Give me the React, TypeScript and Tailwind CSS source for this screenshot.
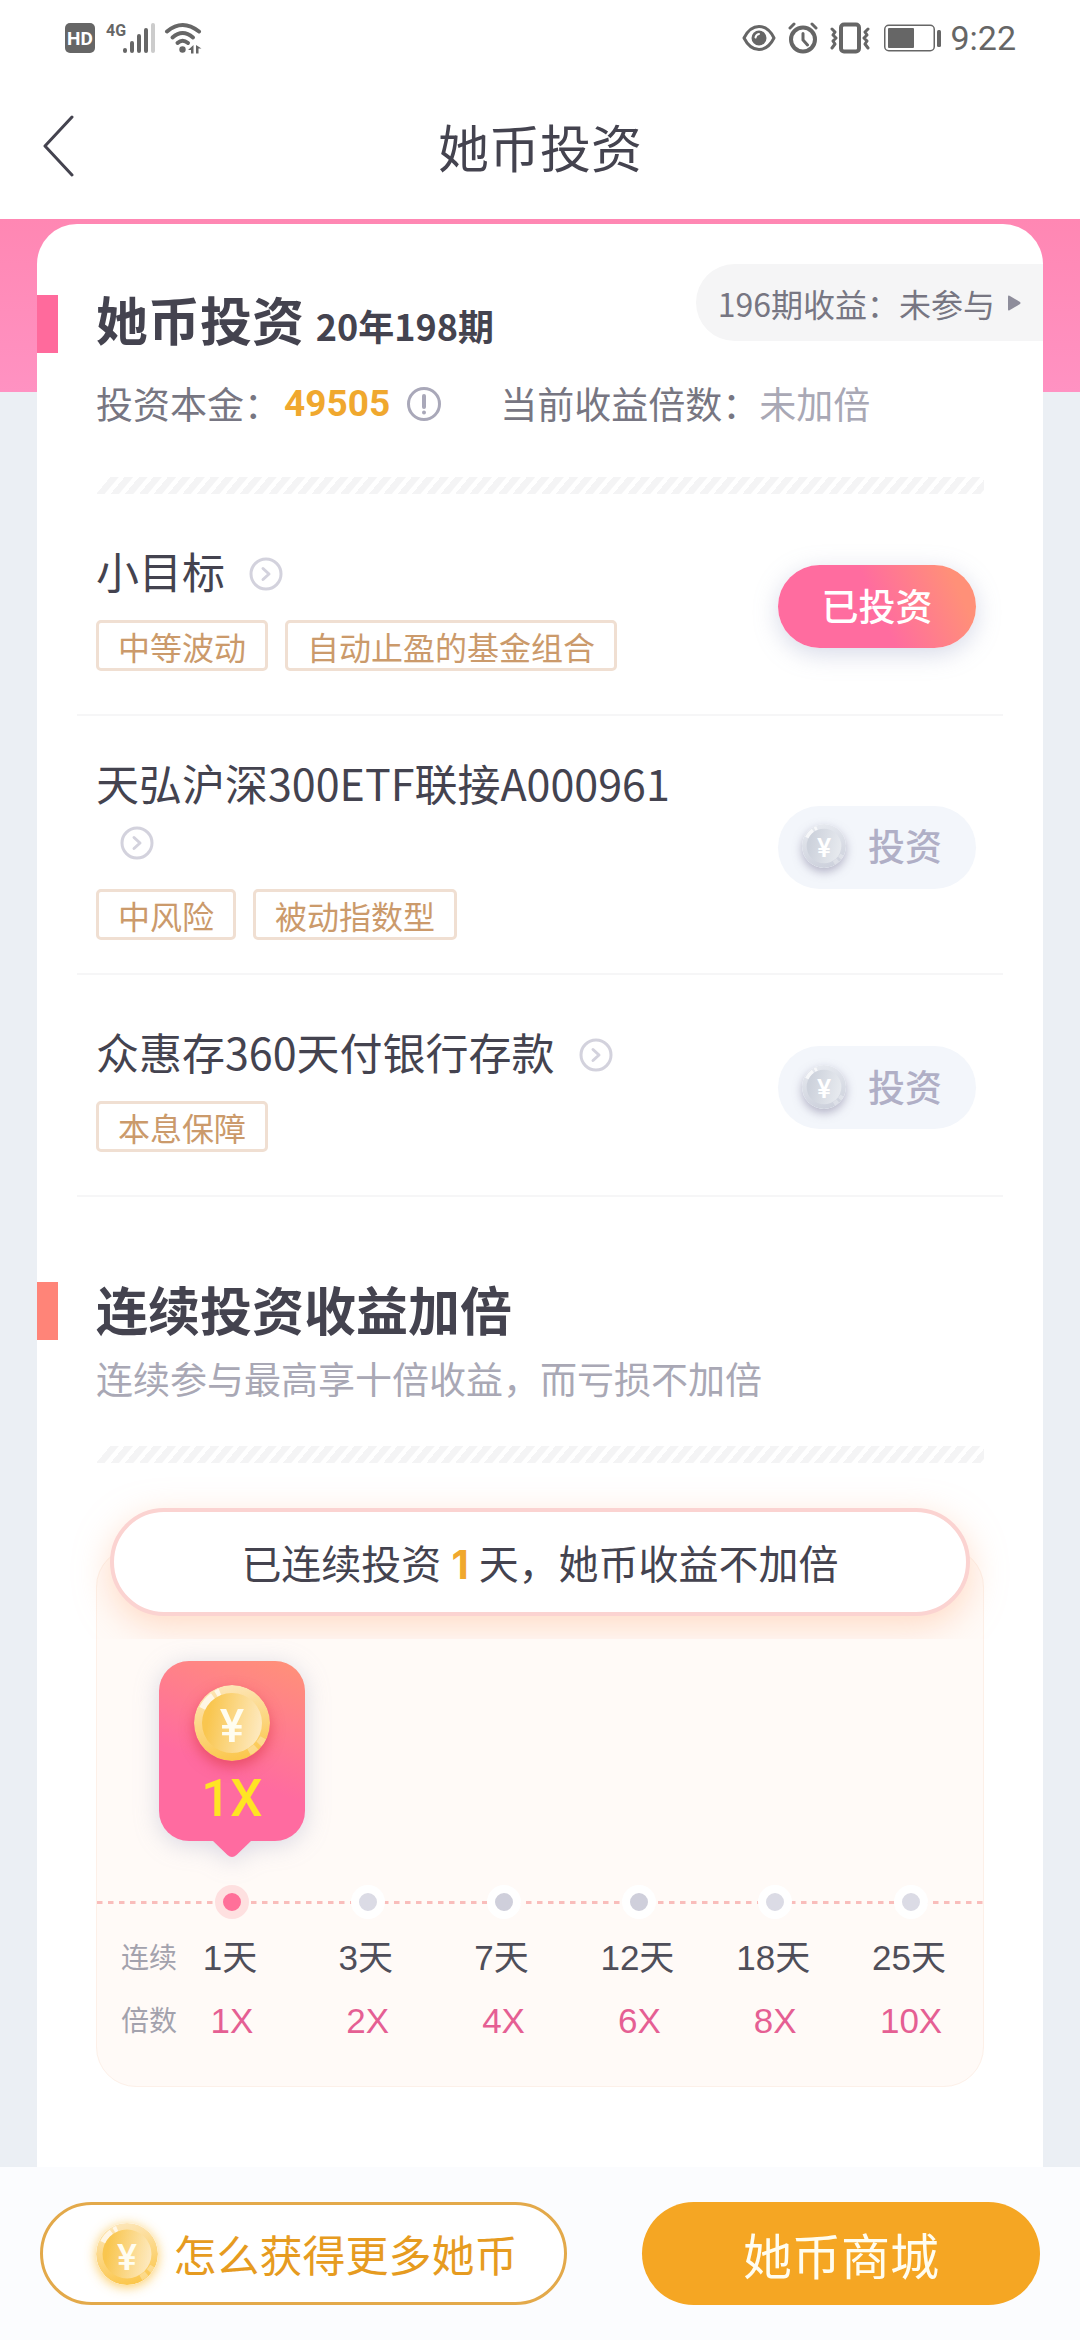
import React from 'react';

type CoinTone = 'gold' | 'silver';

interface Product {
    name: string;
    tags: string[];
    invested: boolean;
}

interface Step {
    days: string;
    rate: string;
    state: 'active' | 'dark' | 'light';
}

const products: Product[] = [
    { name: '小目标', tags: ['中等波动', '自动止盈的基金组合'], invested: true },
    { name: '天弘沪深300ETF联接A000961', tags: ['中风险', '被动指数型'], invested: false },
    { name: '众惠存360天付银行存款', tags: ['本息保障'], invested: false },
];

const steps: Step[] = [
    { days: '1天', rate: '1X', state: 'active' },
    { days: '3天', rate: '2X', state: 'light' },
    { days: '7天', rate: '4X', state: 'dark' },
    { days: '12天', rate: '6X', state: 'dark' },
    { days: '18天', rate: '8X', state: 'light' },
    { days: '25天', rate: '10X', state: 'light' },
];

const dotClasses: Record<Step['state'], string> = {
    active: 'border-[#fee0e0] bg-[#ff7099]',
    dark: 'border-white bg-[#cfcfdb]',
    light: 'border-white bg-[#dbdbe5]',
};

const coinColors = {
    gold: { rimTop: '#fde6b8', rimBottom: '#fbc64a', faceLeft: '#f9c64f', faceRight: '#fde8bb', yen: '#fffdf0' },
    silver: { rimTop: '#e6e9ef', rimBottom: '#cdd1dc', faceLeft: '#cdd2dc', faceRight: '#e6e9ee', yen: '#ffffff' },
};

const Coin: React.FC<{ tone: CoinTone; className: string }> = ({ tone, className }) => {
    const id = React.useId();
    const c = coinColors[tone];
    return (
        <svg viewBox="0 0 76 76" className={className} aria-hidden="true">
            <defs>
                <linearGradient id={`${id}rim`} x1="0.4" y1="0" x2="0.6" y2="1">
                    <stop offset="0" stopColor={c.rimTop} />
                    <stop offset="1" stopColor={c.rimBottom} />
                </linearGradient>
                <linearGradient id={`${id}face`} x1="0" y1="0.4" x2="1" y2="0.6">
                    <stop offset="0.1" stopColor={c.faceLeft} />
                    <stop offset="0.95" stopColor={c.faceRight} />
                </linearGradient>
            </defs>
            <circle cx="38" cy="38" r="38" fill={`url(#${id}rim)`} />
            <path d="M8.5 23.5A33 33 0 0 1 19 11" fill="none" stroke="#fff" strokeOpacity="0.7" strokeWidth="7" />
            <path d="M22 9A33 33 0 0 1 26 7" fill="none" stroke="#fff" strokeOpacity="0.7" strokeWidth="7" />
            <path d="M69.500 53A34 34 0 0 1 65 59" fill="none" stroke="#fff" strokeOpacity="0.3" strokeWidth="7" />
            <path d="M62 62A34 34 0 0 1 55 67" fill="none" stroke="#fff" strokeOpacity="0.3" strokeWidth="7" />
            <circle cx="38" cy="38" r="30" fill={`url(#${id}face)`} />
            <text
                x="38"
                y="57"
                textAnchor="middle"
                fill={c.yen}
                className="font-['Roboto',sans-serif] text-[46px] font-medium"
            >
                ¥
            </text>
        </svg>
    );
};

const StatusBar = () => (
    <div className="flex h-[76px] items-center justify-between pr-16 pl-16 text-[#666]">
        <div className="flex items-center">
            <svg width="92" height="32" viewBox="0 0 92 32" aria-label="HD 4G">
                <rect x="1" y="1" width="30" height="30" rx="5" fill="currentColor" />
                <text x="16" y="23" textAnchor="middle" fill="#fff" className="font-['Roboto',sans-serif] text-[19px] font-bold">HD</text>
                <text x="42" y="14" fill="currentColor" className="font-['Roboto',sans-serif] text-[16px] font-bold">4G</text>
                <g stroke="currentColor" strokeWidth="4" strokeLinecap="round">
                    <path d="M61 28v1M68 21v8M75 14v15M82 8v21" />
                    <path d="M89 3v26" stroke="#ccc" />
                </g>
            </svg>
            <svg className="ml-2" width="38" height="32" viewBox="0 0 38 32" aria-hidden="true">
                <g fill="none" stroke="currentColor" strokeWidth="4" strokeLinecap="round">
                    <path d="M3 9.500Q18.500-3.500 35 9.500" />
                    <path d="M8.500 15.500Q18.500 6.500 29 15.500" />
                    <path d="M13.500 21Q18.500 16.500 24 21" />
                </g>
                <circle cx="18.500" cy="27.500" r="3.200" fill="currentColor" />
                <path d="M29.500 23v8.500h-2.500v-3.500h-3zM32 31.500V23l5.500 3.500h-3v5z" fill="currentColor" />
            </svg>
        </div>
        <div className="flex items-center">
            <svg width="34" height="32" viewBox="0 0 34 32" fill="none" stroke="currentColor" strokeWidth="3" aria-hidden="true">
                <path d="M2 16C6 8 11 4.500 17 4.500S28 8 32 16C28 24 23 27.500 17 27.500S6 24 2 16z" strokeLinejoin="round" />
                <circle cx="17" cy="16" r="7.500" fill="currentColor" stroke="none" />
                <path d="M13.500 15.500Q14 12.500 17 12" stroke="#fff" strokeWidth="2" strokeLinecap="round" />
            </svg>
            <svg className="ml-3" width="30" height="32" viewBox="0 0 30 32" fill="none" stroke="currentColor" strokeWidth="4" strokeLinecap="round" aria-hidden="true">
                <circle cx="15" cy="17.500" r="12" />
                <path d="M15 11.500v6.500l4.500 5M2 6l4-4M24 2l4 4" strokeWidth="3" />
            </svg>
            <svg className="ml-3" width="40" height="32" viewBox="0 0 40 32" fill="none" stroke="currentColor" strokeLinecap="round" strokeLinejoin="round" aria-hidden="true">
                <rect x="11" y="2.500" width="18" height="27" rx="3" strokeWidth="4" />
                <path d="M2 7l3 3-2 3 3 3-3 3 2 3-3 4M38 7l-3 3 2 3-3 3 3 3-2 3 3 4" strokeWidth="3" />
            </svg>
            <svg className="ml-3" width="60" height="32" viewBox="0 0 60 32" fill="none" aria-hidden="true">
                <rect x="2.750" y="3.250" width="49.500" height="25.500" rx="4" stroke="currentColor" strokeWidth="1.500" />
                <rect x="6" y="6" width="26" height="20" rx="1" fill="currentColor" />
                <rect x="55" y="8" width="4" height="17" rx="1.500" fill="currentColor" />
            </svg>
            <span className="ml-2 font-['Roboto',sans-serif] text-[34px] leading-[40px]">9:22</span>
        </div>
    </div>
);

const NavBar = () => (
    <nav className="grid h-[143px] grid-cols-[1fr_auto_1fr] items-center px-10 pb-[3px] text-[#44434f]">
        <button type="button" aria-label="返回" className="justify-self-start">
            <svg width="36" height="62" viewBox="0 0 36 62" fill="none" stroke="currentColor" strokeWidth="3" strokeLinecap="round" strokeLinejoin="round">
                <path d="M32 2L5 31L32 60" />
            </svg>
        </button>
        <h1 className="text-[51px] leading-[60px]">她币投资</h1>
    </nav>
);

const SectionTitle: React.FC<{ barClass: string; children: React.ReactNode }> = ({ barClass, children }) => (
    <div className="flex h-[58px] items-center gap-[38px]">
        <span className={`h-full w-[21px] ${barClass}`} />
        <h2 className="pb-1 text-[52px] leading-[58px] font-bold text-[#44434f]">{children}</h2>
    </div>
);

const Stripes = () => (
    <div className="mx-[59px] h-[17px] bg-[repeating-linear-gradient(130deg,#f4f4f5_0,#f4f4f5_6px,#fff_7px,#fff_11px)] [clip-path:polygon(14px_0,100%_0,100%_100%,0_100%)]" />
);

const CircleArrow = () => (
    <svg className="mb-[6px] ml-6 inline-block align-middle" width="34" height="34" viewBox="0 0 34 34" fill="none" stroke="#d3d2dd" strokeWidth="3" strokeLinecap="round" strokeLinejoin="round" aria-hidden="true">
        <circle cx="17" cy="17" r="15" />
        <path d="M14 11.500L20 17L14 22.500" />
    </svg>
);

const ProductRow: React.FC<{ product: Product }> = ({ product }) => (
    <li className="mx-10 flex min-h-[222px] items-center justify-between border-b-2 border-[#f6f6f7] pt-[38px] pr-[27px] pb-[33px] pl-[19px]">
        <div className="w-[600px]">
            <a href="#detail" className="block text-[43px] leading-[57px] text-[#44434f]">
                {product.name}
                <CircleArrow />
            </a>
            <div className="mt-[21px] flex gap-[17px]">
                {product.tags.map(tag => (
                    <span
                        key={tag}
                        className="flex h-[51px] items-center rounded-[5px] border-3 border-[#f0dfd2] px-[19px] text-[32px] leading-[40px] text-[#cb9a6b]"
                    >
                        {tag}
                    </span>
                ))}
            </div>
        </div>
        {product.invested ? (
            <button
                type="button"
                className="h-[83px] w-[198px] rounded-full bg-[linear-gradient(65deg,#ff6c9f_50%,#ff9078_88%)] pb-[2px] text-[37px] font-medium text-white shadow-[0_6px_24px_rgba(140,150,190,0.35)]"
            >
                已投资
            </button>
        ) : (
            <button
                type="button"
                className="flex h-[83px] w-[198px] items-center gap-[22px] rounded-full bg-[#f3f6fb] pb-[2px] pl-6 text-[37px] font-medium text-[#b0afc6]"
            >
                <Coin tone="silver" className="size-11 rounded-full shadow-[0_4px_10px_rgba(120,115,150,0.5)]" />
                投资
            </button>
        )}
    </li>
);

const Timeline = () => (
    <div className="mx-[59px] -mt-[69px] rounded-[40px] border border-[#fdf0e8] bg-[#fffaf7] pt-[113px] pb-[33px]">
        <div className="grid grid-cols-6 pr-1 pl-[67px]">
            <div className="flex flex-col items-center justify-self-center drop-shadow-[0_4px_12px_rgba(130,140,180,0.3)]">
                <div className="flex h-[180px] w-[146px] flex-col items-center rounded-[30px] bg-[linear-gradient(22deg,#ff6ba0_40%,#ff9277_100%)] pt-6">
                    <Coin tone="gold" className="size-[76px] rounded-full shadow-[0_6px_14px_rgba(215,50,60,0.55)]" />
                    <span className="mt-[10px] font-['Roboto',sans-serif] text-[51px] leading-[56px] font-medium text-[#ffe424]">1X</span>
                </div>
                <svg width="38" height="16" viewBox="0 0 38 16" fill="#ff6ba0" aria-hidden="true">
                    <path d="M0 0H38L23.500 14Q19 18 14.500 14z" />
                </svg>
            </div>
        </div>
        <div className="mt-7 grid grid-cols-6 items-center bg-[repeating-linear-gradient(90deg,#f9bdbb_0,#f9bdbb_5px,transparent_6px,transparent_11px)] bg-[length:100%_3px] bg-center bg-no-repeat pr-1 pl-[67px]">
            {steps.map(step => (
                <span
                    key={step.days}
                    className={`size-[34px] justify-self-center rounded-full border-8 ${dotClasses[step.state]}`}
                />
            ))}
        </div>
        <div className="mt-2 pr-1">
            <table className="w-full table-fixed text-center font-['Liberation_Sans','Noto_Sans_CJK_SC',sans-serif] text-[35px]">
                <tbody>
                    <tr className="h-[63px] text-[#4f4e59]">
                        <th scope="row" className="w-[67px] pl-6 text-left text-[28px] font-normal whitespace-nowrap text-[#a3a2ad]">连续</th>
                        {steps.map(step => <td key={step.days} className="pr-1">{step.days}</td>)}
                    </tr>
                    <tr className="h-[63px] text-[#e55f93]">
                        <th scope="row" className="w-[67px] pl-6 text-left text-[28px] font-normal whitespace-nowrap text-[#a3a2ad]">倍数</th>
                        {steps.map(step => <td key={step.days}>{step.rate}</td>)}
                    </tr>
                </tbody>
            </table>
        </div>
    </div>
);

const App = () => {
    return (
        <div className="flex min-h-screen flex-col bg-white font-['Noto_Sans_CJK_SC',sans-serif]">
            <header>
                <StatusBar />
                <NavBar />
            </header>

            <main className="flex flex-1 flex-col bg-[#ebeff4] bg-[linear-gradient(#ff87b3,#ff92c2)] bg-[length:100%_173px] bg-no-repeat px-[37px] pt-[5px]">
                <div className="flex-1 rounded-t-[40px] bg-white pt-10 pb-[78px]">
                    <section>
                        <div className="flex items-start justify-between">
                            <div className="mt-[31px]">
                                <SectionTitle barClass="bg-[#ff6a9c]">
                                    她币投资 <span className="text-[36px]">20年198期</span>
                                </SectionTitle>
                            </div>
                            <a href="#last" className="flex h-[77px] items-center gap-[13px] rounded-l-full bg-[#f5f5f6] pr-[22px] pl-[22px] text-[32px] text-[#777682]">
                                196期收益：未参与
                                <svg width="13" height="16" viewBox="0 0 13 16" fill="#8e8d9b" aria-hidden="true">
                                    <path d="M0 1.500Q0 0 1.500 .7L12 7Q13 8 12 9L1.500 15.300Q0 16 0 14.500z" />
                                </svg>
                            </a>
                        </div>
                        <div className="mt-[23px] flex h-14 items-center pl-[59px] text-[37px] text-[#777682]">
                            <span>投资本金：</span>
                            <span className="ml-[3px] font-['Roboto',sans-serif] font-bold text-[#f0a82e]">49505</span>
                            <button type="button" aria-label="说明" className="ml-[17px]">
                                <svg width="34" height="34" viewBox="0 0 34 34" fill="none" stroke="#a9a8b9" strokeWidth="3" strokeLinecap="round">
                                    <circle cx="17" cy="17" r="15.500" />
                                    <path d="M17 9v11" strokeWidth="4" />
                                    <path d="M17 25.500v.1" strokeWidth="4" />
                                </svg>
                            </button>
                            <span className="ml-[59px]">当前收益倍数：</span>
                            <span className="text-[#a9a8b5]">未加倍</span>
                        </div>
                        <div className="mt-[45px]">
                            <Stripes />
                        </div>
                        <ul>
                            {products.map(product => <ProductRow key={product.name} product={product} />)}
                        </ul>
                    </section>

                    <section className="mt-[85px]">
                        <SectionTitle barClass="bg-[#ff8478]">连续投资收益加倍</SectionTitle>
                        <p className="mt-[10px] pl-[59px] text-[37px] leading-[56px] text-[#a9a8b5]">连续参与最高享十倍收益，而亏损不加倍</p>
                        <div className="mt-10">
                            <Stripes />
                        </div>
                        <div className="relative mx-[73px] mt-[45px] flex h-[108px] items-center justify-center rounded-full border-4 border-[#fbd3d1] bg-white text-[40px] text-[#44434f] shadow-[0_10px_34px_rgba(255,190,150,0.5)] [clip-path:inset(-40px_-60px_-23px)]">
                            已连续投资
                            <b className="mx-[10px] pt-[6px] font-['Inter',sans-serif] text-[40px] text-[#f0a82e]">1</b>
                            天，她币收益不加倍
                        </div>
                        <Timeline />
                    </section>
                </div>
            </main>

            <footer className="sticky bottom-0 grid grid-cols-[527fr_398fr] gap-[75px] bg-[#fbfcfe] px-10 py-[35px]">
                <button type="button" className="flex h-[103px] items-center justify-center gap-4 rounded-full border-3 border-[#e3a94a] bg-white pl-[6px] text-[43px] text-[#e69b20]">
                    <Coin tone="gold" className="size-[62px] rounded-full shadow-[0_2px_12px_rgba(250,190,60,0.8)]" />
                    怎么获得更多她币
                </button>
                <button type="button" className="h-[103px] rounded-full bg-[#f5a623] text-[49px] text-[#fffdf0]">
                    她币商城
                </button>
            </footer>
        </div>
    );
};

export default App;
